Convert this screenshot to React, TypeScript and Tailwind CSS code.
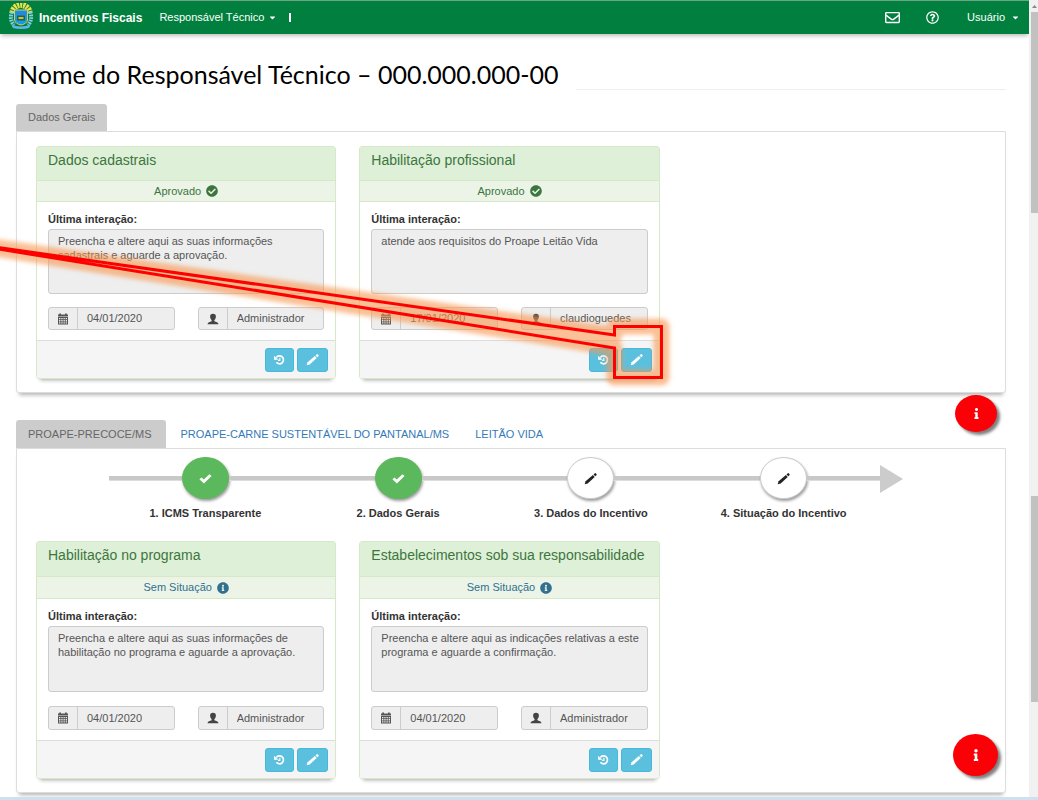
import { useState } from "react";
import clsx from "clsx";
import {
  FaCaretDown,
  FaCheckCircle,
  FaInfo,
  FaInfoCircle,
  FaRegEnvelope,
  FaRegQuestionCircle,
} from "react-icons/fa";

type CardData = {
  id: string;
  title: string;
  status: "Aprovado" | "Sem Situação";
  message: string;
  date: string;
  user: string;
};

const generalCards: CardData[] = [
  {
    id: "cadastrais",
    title: "Dados cadastrais",
    status: "Aprovado",
    message:
      "Preencha e altere aqui as suas informações cadastrais e aguarde a aprovação.",
    date: "04/01/2020",
    user: "Administrador",
  },
  {
    id: "profissional",
    title: "Habilitação profissional",
    status: "Aprovado",
    message: "atende aos requisitos do Proape Leitão Vida",
    date: "17/01/2020",
    user: "claudioguedes",
  },
];

const programCards: CardData[] = [
  {
    id: "programa",
    title: "Habilitação no programa",
    status: "Sem Situação",
    message:
      "Preencha e altere aqui as suas informações de habilitação no programa e aguarde a aprovação.",
    date: "04/01/2020",
    user: "Administrador",
  },
  {
    id: "estabelecimentos",
    title: "Estabelecimentos sob sua responsabilidade",
    status: "Sem Situação",
    message:
      "Preencha e altere aqui as indicações relativas a este programa e aguarde a confirmação.",
    date: "04/01/2020",
    user: "Administrador",
  },
];

const programs = [
  "PROAPE-PRECOCE/MS",
  "PROAPE-CARNE SUSTENTÁVEL DO PANTANAL/MS",
  "LEITÃO VIDA",
];

const steps = [
  { label: "1. ICMS Transparente", done: true },
  { label: "2. Dados Gerais", done: true },
  { label: "3. Dados do Incentivo", done: false },
  { label: "4. Situação do Incentivo", done: false },
];

function Crest() {
  return (
    <svg viewBox="0 0 26 26" className="h-[26px] w-[26px]" aria-hidden="true">
      <path
        d="M4.5 10 A8.5 8 0 0 1 21.5 10"
        fill="none"
        stroke="#e9e04a"
        strokeWidth="6"
        strokeDasharray="2.2 0.8"
      />
      <path
        d="M4 9 Q1 16 6 22 M22 9 Q25 16 20 22"
        fill="none"
        stroke="#86cfe0"
        strokeWidth="4"
        strokeDasharray="1.8 0.8"
      />
      <path d="M6.5 7 H19.5 V17 Q18.5 21 13 22 Q7.5 21 6.5 17 Z" fill="#1c96e6" stroke="#c9cf6a" />
      <path d="M8 8 H18 V12 H8 Z" fill="#2389d8" />
      <path d="M9 12.5 H17 V17.5 H9 Z" fill="#17693f" />
      <path d="M10.5 14 H15.5 V16 H10.5 Z" fill="#e0b73a" />
      <path d="M3 21 Q13 26 23 21 L21 25 Q13 27 5 25 Z" fill="#5fb6ea" />
    </svg>
  );
}

function PencilIcon() {
  return (
    <svg viewBox="0 0 12 12" className="h-[13px] w-[13px]" fill="currentColor" aria-hidden="true">
      <path d="M0.6 11.4 L1.5 8.6 L8.2 2.8 L9.9 4.5 L3.4 10.5 Z" />
      <path d="M8.8 2.2 L10 1.1 Q10.5 0.8 11 1.3 L11.5 1.9 Q11.9 2.4 11.5 2.9 L10.4 3.9 Z" />
    </svg>
  );
}

function HistoryIcon() {
  return (
    <svg viewBox="0 0 12 12" className="h-[11px] w-[11px]" aria-hidden="true">
      <path d="M2.6 3.8 A4.3 4.3 0 1 1 2.6 9" fill="none" stroke="currentColor" strokeWidth="1.8" />
      <path d="M0 2 V6.4 H4.8 Z" fill="currentColor" />
      <path d="M6.4 4 V6.9 H4.4" fill="none" stroke="currentColor" strokeWidth="1.2" />
    </svg>
  );
}

function CheckIcon() {
  return (
    <svg viewBox="0 0 12 12" className="h-[13px] w-[13px]" fill="currentColor" aria-hidden="true">
      <path d="M0.4 6.8 L2.3 5 L4.4 6.9 L9.7 2 L11.6 3.8 L4.5 10.6 Z" />
    </svg>
  );
}

function CalendarIcon() {
  return (
    <svg viewBox="0 0 12 12" className="h-3 w-3" fill="#555" aria-hidden="true">
      <path d="M1 1.5 H2.2 V0.5 H4 V1.5 H8 V0.5 H9.8 V1.5 H11 V3.6 H1 Z" />
      <path
        d="M1 4 H11 V11.5 H1 Z M2 5 V6.3 H3.4 V5 Z M4.3 5 V6.3 H5.6 V5 Z M6.5 5 V6.3 H7.8 V5 Z M8.7 5 V6.3 H10 V5 Z M2 7.1 V8.4 H3.4 V7.1 Z M4.3 7.1 V8.4 H5.6 V7.1 Z M6.5 7.1 V8.4 H7.8 V7.1 Z M8.7 7.1 V8.4 H10 V7.1 Z M2 9.3 V10.6 H3.4 V9.3 Z M4.3 9.3 V10.6 H5.6 V9.3 Z M6.5 9.3 V10.6 H7.8 V9.3 Z M8.7 9.3 V10.6 H10 V9.3 Z"
        fillRule="evenodd"
      />
    </svg>
  );
}

function UserIcon() {
  return (
    <svg viewBox="0 0 12 12" className="h-3 w-3" fill="#444" aria-hidden="true">
      <path d="M6 0.8 C8 0.8 9 2 8.9 3.8 C8.8 5.2 8.2 6.4 7.4 7.1 V8.2 C9 8.8 11.4 9.2 11.5 11.2 H0.5 C0.6 9.2 3 8.8 4.6 8.2 V7.1 C3.8 6.4 3.2 5.2 3.1 3.8 C3 2 4 0.8 6 0.8 Z" />
    </svg>
  );
}

function InfoCard({ card, tall }: { card: CardData; tall?: boolean }) {
  const approved = card.status === "Aprovado";
  const addon = "flex w-[29px] shrink-0 items-center justify-center border-r border-[#ccc]";
  const group = clsx(
    "flex overflow-hidden rounded-[3px] border border-[#ccc] bg-[#eee]",
    tall ? "h-6" : "h-[23px]"
  );

  return (
    <article className="rounded-[3px] border border-[#d6e9c6] bg-white shadow-[0_5px_4px_-4px_rgba(0,0,0,0.35)]">
      <h2
        className={clsx(
          "border-b border-[#d6e9c6] bg-[#dff0d8] px-[11px] pt-[3px] text-[14px] leading-5 whitespace-nowrap text-[#3c763d]",
          tall ? "h-[35px]" : "h-[34px]"
        )}
      >
        {card.title}
      </h2>
      <div
        className={clsx(
          "flex items-center justify-center gap-[5px] border-b border-[#d6e9c6] bg-[#ebf4e7]",
          tall ? "h-[22px]" : "h-[21px]",
          approved ? "text-[#3c763d]" : "text-[#31708f]"
        )}
      >
        {card.status}
        {approved ? <FaCheckCircle size={12} /> : <FaInfoCircle size={12} />}
      </div>

      <div className="px-[11px] pt-[9px] pb-[10px]">
        <label htmlFor={`${card.id}-msg`} className="block leading-4 font-bold text-[#333]">
          Última interação:
        </label>
        <textarea
          id={`${card.id}-msg`}
          readOnly
          value={card.message}
          className={clsx(
            "mt-[2px] block w-full resize-none rounded-[3px] border border-[#ccc] bg-[#eee] py-1 pr-1 pl-[9px] leading-[14px] text-[#555]",
            tall ? "h-[66px]" : "h-[65px]"
          )}
        />
        <div className={clsx("grid grid-cols-2 gap-[23px]", tall ? "mt-[14px]" : "mt-[13px]")}>
          <div className={group}>
            <span className={addon}>
              <CalendarIcon />
            </span>
            <input
              aria-label="Data"
              readOnly
              value={card.date}
              className="w-full min-w-0 px-[9px] text-[#555]"
            />
          </div>
          <div className={group}>
            <span className={addon}>
              <UserIcon />
            </span>
            <input
              aria-label="Usuário"
              readOnly
              value={card.user}
              className="w-full min-w-0 px-[9px] text-[#555]"
            />
          </div>
        </div>
      </div>

      <footer className="flex h-[38px] items-center justify-end gap-[3px] border-t border-[#ddd] bg-[#f5f5f5] px-[7px]">
        <button
          type="button"
          aria-label="Histórico"
          className="flex h-6 w-[29px] items-center justify-center rounded-[3px] border border-[#46b8da] bg-[#5bc0de] text-white"
        >
          <HistoryIcon />
        </button>
        <button
          type="button"
          aria-label="Editar"
          className="flex h-6 w-[31px] items-center justify-center rounded-[3px] border border-[#46b8da] bg-[#5bc0de] text-white"
        >
          <PencilIcon />
        </button>
      </footer>
    </article>
  );
}

function Stepper() {
  return (
    <div className="flex items-start pr-[102px] pl-[92px]">
      <ol className="grid flex-1 grid-cols-4">
        {steps.map((step) => (
          <li key={step.label} className="text-center">
            <div className="flex items-center">
              <span className="h-[5px] flex-1 border-b border-[#ddd] bg-[#c8c8c8]" />
              <span
                className={clsx(
                  "flex h-[42px] w-[47px] items-center justify-center rounded-[50%] border shadow-[1px_2px_3px_rgba(0,0,0,0.4)]",
                  step.done
                    ? "border-[#5cb85c] bg-[#5cb85c] text-white"
                    : "border-[#ccc] bg-white text-[#222]"
                )}
              >
                {step.done ? <CheckIcon /> : <PencilIcon />}
              </span>
              <span className="h-[5px] flex-1 border-b border-[#ddd] bg-[#c8c8c8]" />
            </div>
            <p className="mt-[6px] leading-4 font-bold whitespace-nowrap text-[#333]">{step.label}</p>
          </li>
        ))}
      </ol>
      <svg viewBox="0 0 23 28" className="mt-2 h-7 w-[23px]" aria-hidden="true">
        <path d="M0 0 L23 14 L0 28 Z" fill="#ccc" />
      </svg>
    </div>
  );
}

function ScrollBar() {
  return (
    <div className="flex w-[9px] shrink-0 flex-col items-end bg-[#f1f1f1]" aria-hidden="true">
      <svg viewBox="0 0 9 12" className="h-3 w-[9px]">
        <path d="M3 8 L5.5 5 L8 8 Z" fill="#888" />
      </svg>
      <div className="h-[201px] w-[7px] bg-[#c1c1c1]" />
      <div className="mt-[283px] h-[206px] w-[7px] bg-[#c1c1c1]" />
    </div>
  );
}

// red outline pointing at the edit button
function Callout() {
  const d = "M-83 236 L614.5 335 V326.5 H661.5 V377.5 H614.5 V348 Z";
  return (
    <svg
      width="700"
      height="400"
      className="pointer-events-none absolute top-0 left-0"
      aria-hidden="true"
    >
      <defs>
        <filter id="glow" x="-10%" y="-20%" width="120%" height="140%">
          <feGaussianBlur stdDeviation="2" />
        </filter>
      </defs>
      <path
        d={d}
        fill="none"
        stroke="#f9964f"
        strokeOpacity="0.6"
        strokeWidth="16"
        strokeLinejoin="round"
        filter="url(#glow)"
      />
      <path d={d} fill="none" stroke="#f00" strokeWidth="3" />
    </svg>
  );
}

export default function App() {
  const [program, setProgram] = useState(programs[0]);

  const panel =
    "border border-[#ddd] bg-white shadow-[0_5px_4px_-3px_rgba(0,0,0,0.3)] rounded-b-[3px]";
  const cardGrid = "grid grid-cols-3 gap-[23px] pr-[22px] pl-[19px]";
  const infoButton =
    "absolute flex items-center justify-center rounded-[50%] bg-[#fb0007] text-white shadow-[3px_3px_3px_rgba(0,0,0,0.5)]";

  return (
    <div className="relative flex min-h-screen flex-col overflow-hidden bg-white font-['Liberation_Sans',Arial,sans-serif] text-[11px]">
      <div className="flex flex-1">
        <div className="min-w-0 flex-1">
          {/* Navbar */}
          <header className="flex h-[34px] items-center border-t border-[#6ba583] bg-[#007f3e] pr-[9px] pl-2 text-white shadow-[0_3px_4px_-1px_rgba(0,0,0,0.25)]">
            <a href="#" className="mb-1 flex items-center">
              <Crest />
            </a>
            <a href="#" className="ml-[5px] text-[12px] font-bold">
              Incentivos Fiscais
            </a>
            <button type="button" className="ml-[17px] flex items-center gap-1">
              Responsável Técnico
              <FaCaretDown size={9} />
            </button>
            <span className="ml-3 h-[9px] w-[2px] bg-white" />
            <nav className="ml-auto flex items-center">
              <a href="#" aria-label="Mensagens">
                <FaRegEnvelope size={15} />
              </a>
              <a href="#" aria-label="Ajuda" className="ml-[26px]">
                <FaRegQuestionCircle size={13} />
              </a>
              <button type="button" className="ml-7 flex items-center gap-[6px]">
                Usuário
                <FaCaretDown size={9} />
              </button>
            </nav>
          </header>

          <main className="pr-[23px] pl-4">
            {/* Title */}
            <div className="flex h-14 items-end pl-[3px]">
              <h1 className="font-[Lato,sans-serif] text-[25px] leading-8 whitespace-nowrap text-black">
                Nome do Responsável Técnico – 000.000.000-00
              </h1>
              <hr className="ml-[17px] flex-1 border-[#eee]" />
            </div>

            {/* Dados gerais */}
            <button
              type="button"
              className="mt-[14px] block h-[27px] rounded-t-[3px] bg-[#ccc] px-3 text-[#666]"
            >
              Dados Gerais
            </button>
            <section className={clsx(panel, "pt-[14px] pb-[13px]")}>
              <div className={cardGrid}>
                {generalCards.map((card) => (
                  <InfoCard key={card.id} card={card} />
                ))}
              </div>
            </section>

            {/* Programas */}
            <div role="tablist" className="mt-[27px] flex h-7">
              {programs.map((name) => (
                <button
                  key={name}
                  type="button"
                  role="tab"
                  aria-selected={name === program}
                  onClick={() => setProgram(name)}
                  className={clsx(
                    "mr-[2px] rounded-t-[3px] px-3 whitespace-nowrap",
                    name === program ? "bg-[#ccc] pr-[15px] text-[#666]" : "text-[#337ab7]"
                  )}
                >
                  {name}
                </button>
              ))}
            </div>
            <section className={clsx(panel, "pt-2 pb-[13px]")}>
              <Stepper />
              <div className={clsx(cardGrid, "mt-5")}>
                {programCards.map((card) => (
                  <InfoCard key={card.id} card={card} tall />
                ))}
              </div>
            </section>
          </main>
        </div>
        <ScrollBar />
      </div>
      <div className="h-[3px] bg-[#cfe0f1]" />

      {/* Floating help */}
      <button
        type="button"
        aria-label="Informações"
        className={clsx(infoButton, "top-[395px] right-[41px] h-[37px] w-[42px]")}
      >
        <FaInfo size={11} />
      </button>
      <button
        type="button"
        aria-label="Informações do programa"
        className={clsx(infoButton, "top-[734px] right-[40px] h-[42px] w-[45px]")}
      >
        <FaInfo size={12} />
      </button>
      <Callout />
    </div>
  );
}
